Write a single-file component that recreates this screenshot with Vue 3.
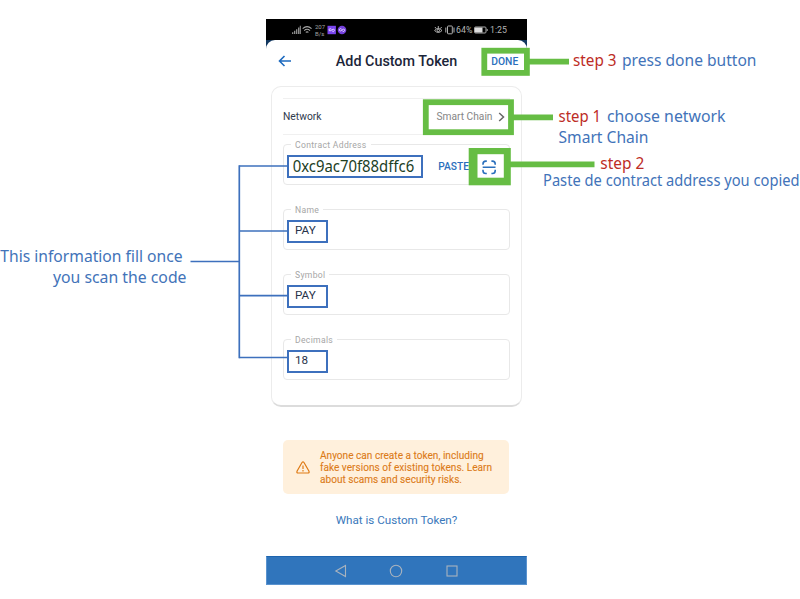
<script setup>
const fields = [
  { label: 'Contract Address', value: '', contract: true },
  { label: 'Name', value: 'PAY' },
  { label: 'Symbol', value: 'PAY' },
  { label: 'Decimals', value: '18' },
]

const branches = [166, 231, 295.7, 357.5]
const greenBoxes = [
  { x: 484.3, y: 50.7, w: 42.6, h: 22.2 },
  { x: 425.8, y: 102.2, w: 85.2, h: 30 },
]
const notes = [
  { t: 'step 3', x: 573, y: 65.5, w: 43.5, red: true },
  { t: 'press done button', x: 622, y: 65.5, w: 134.5 },
  { t: 'step 1', x: 558.5, y: 121.8, w: 42.5, red: true },
  { t: 'choose network', x: 607, y: 121.8, w: 118.5 },
  { t: 'Smart Chain', x: 558.5, y: 143, w: 90 },
  { t: 'step 2', x: 600.3, y: 169, w: 44, red: true },
  { t: 'Paste de contract address you copied', x: 543, y: 186, w: 256.5, small: true },
  { t: 'This information fill once', x: 0.3, y: 261.8, w: 182.3 },
  { t: 'you scan the code', x: 53, y: 283, w: 133.5 },
]
</script>

<template>
  <main class="page">
    <section class="phone">
      <div class="status">
        <svg class="signal" viewBox="0 0 18 9" width="20" height="10">
          <path d="M0 8h1.2V6.5H0zM1.8 8H3V5.2H1.8zM3.6 8h1.2V3.8H3.6zM5.4 8h1.2V2.2H5.4zM7 8h1V.6H7z" fill="#8c8c8c" />
          <g fill="none" stroke="#aaa" stroke-width="1"><path d="M9.6 3.2q4-3.4 8 0M11 5q2.6-2.3 5.200 0M12.400 6.700q1.200-1 2.400 0" /></g>
        </svg>
        <div class="speed"><span>207</span><span>B/s</span></div>
        <svg class="badges" viewBox="0 0 20 10" width="20" height="10">
          <rect x="0.500" y="0.800" width="8.400" height="8.400" fill="#7a45ee" />
          <circle cx="15" cy="5" r="4.300" fill="#7440dc" />
          <g fill="none" stroke="#e6dcff" stroke-width="0.900">
            <path d="M4.300 4.200Q3 3 2.200 4.200T3 6L6.200 4.200Q7.800 4.200 7.300 5.800T5.100 5.900" />
            <path d="M14.600 4.200Q13.300 3 12.500 4.200T13.300 6L16.500 4.200Q18 4.200 17.500 5.800T15.400 5.900" />
          </g>
        </svg>
        <svg class="modes" viewBox="0 0 21 10" width="21" height="10">
          <g fill="none" stroke="#c4c4c4" stroke-width="0.900">
            <path d="M.6 5.500Q4.300 1.500 8 5.500Q4.300 9.400.6 5.500M4.300 3.500V1M2.100 3.600L1 2M6.500 3.600L7.600 2" />
            <circle cx="4.300" cy="5.500" r="1.200" />
            <rect x="13.500" y="1" width="4.800" height="7.800" rx=".7" />
            <path d="M11.800 2.500v5M20 2.500v5" />
          </g>
        </svg>
        <span class="pct">64%</span>
        <svg class="battery" viewBox="0 0 14 8" width="14" height="8">
          <rect x=".5" y="1" width="11.500" height="6" rx="1" fill="none" stroke="#aaa" />
          <rect x="1" y="1.500" width="7.500" height="5" fill="#dedede" />
          <path d="M13.200 3v2" stroke="#aaa" />
        </svg>
        <span class="clock">1:25</span>
      </div>

      <div class="sheet">
        <header class="bar">
          <svg class="back" viewBox="0 0 14 12" width="14" height="12">
            <path d="M13 6H1.800M6.500 1L1.500 6l5 5" fill="none" stroke="#1d6abf" stroke-width="1.600" />
          </svg>
          <h1>Add Custom Token</h1>
          <span class="done">DONE</span>
        </header>

        <div class="card">
          <div class="network">
            <span class="net-label">Network</span>
            <span class="net-value">Smart Chain</span>
            <svg viewBox="0 0 7 10" width="7" height="10">
              <path d="M1.200 1L5.500 5 1.200 9" fill="none" stroke="#666" stroke-width="1.500" />
            </svg>
          </div>
          <fieldset v-for="f in fields" :key="f.label" class="field">
            <legend>{{ f.label }}</legend>
            <div v-if="f.contract" class="contract">
              <div class="mark address">
                <svg width="132" height="19" viewBox="0 0 132 19">
                  <text x="3.700" y="15.300" textLength="121.500" lengthAdjust="spacingAndGlyphs">0xc9ac70f88dffc6</text>
                </svg>
              </div>
              <span class="paste">PASTE</span>
            </div>
            <div v-else class="mark short">{{ f.value }}</div>
          </fieldset>
        </div>

        <div class="warning">
          <svg viewBox="0 0 14 13" width="14" height="13">
            <path d="M6 1.500Q7 .2 8 1.500L13 10.300Q13.500 12 12 12H2Q.5 12 1 10.300Z" fill="none" stroke="#df7a14" stroke-width="1.200" />
            <path d="M7 4.400V8M7 9v1.400" stroke="#df7a14" stroke-width="1.200" />
          </svg>
          <p>Anyone can create a token, including<br />fake versions of existing tokens. Learn<br />about scams and security risks.</p>
        </div>
        <a class="link">What is Custom Token?</a>
      </div>

      <nav class="nav">
        <svg viewBox="0 0 14 14" width="14" height="14"><path d="M11.500 1.500v11L1.800 7z" /></svg>
        <svg viewBox="0 0 14 14" width="14" height="14"><circle cx="7" cy="7" r="5.700" /></svg>
        <svg viewBox="0 0 14 14" width="14" height="14"><rect x="2" y="2" width="10" height="10" /></svg>
      </nav>
    </section>

    <svg class="notes" width="800" height="599" viewBox="0 0 800 599">
      <g class="tree">
        <path d="M190.500 261.500H239.300M239.300 165.300V358.200" />
        <path v-for="y in branches" :key="y" :d="`M239.300 ${y}H287`" />
      </g>
      <g class="green">
        <rect v-for="b in greenBoxes" :key="b.x" :x="b.x" :y="b.y" :width="b.w" :height="b.h" />
        <path d="M529 61.600H569M513 117.400H553M510 164.300H594.500" />
      </g>
      <rect x="468.700" y="148" width="42.100" height="37.300" fill="#66bd44" />
      <rect x="477.500" y="154.200" width="26.300" height="23.500" fill="#fff" />
      <path class="scan" d="M483 164.800v-.9q0-2.800 2.800-2.800h1M491.400 161.100h1q2.800 0 2.800 2.800v.9M495.200 169.800v.9q0 2.800-2.800 2.800h-1M486.800 173.500h-1q-2.800 0-2.800-2.800v-.9M482.700 167.200h12.800" />
      <text
        v-for="n in notes" :key="n.t" :x="n.x" :y="n.y"
        :textLength="n.w" lengthAdjust="spacingAndGlyphs"
        :class="{ red: n.red, small: n.small }"
      >{{ n.t }}</text>
    </svg>
  </main>
</template>

<style>
body { margin: 0; background: #fff; }
</style>

<style scoped>
.page {
  position: relative;
  width: 800px;
  height: 599px;
  overflow: hidden;
  box-sizing: border-box;
  padding: 19px 0 0 266px;
  font-family: Roboto, "Liberation Sans", sans-serif;
  background: #fff;
}
.phone {
  width: 261px;
  height: 566px;
  display: flex;
  flex-direction: column;
  background: linear-gradient(#000 21px, #12375f 21px, #12375f 30px, #fff 30px);
}
.status {
  height: 21px;
  flex: none;
  display: flex;
  align-items: center;
  padding: 1px 20px 0 26px;
  box-sizing: border-box;
  color: #b4b4b4;
  font-size: 8.800px;
}
.speed {
  display: flex;
  flex-direction: column;
  font-size: 6px;
  line-height: 7px;
  width: 10px;
  margin: 0 2px 0 3px;
  color: #a0a0a0;
}
.modes { margin-left: 87px; }
.pct { margin-left: 1px; width: 17px; }
.battery { margin-left: 1px; }
.clock { margin-left: 2px; font-size: 8.800px; white-space: nowrap; }
.sheet {
  flex: 1;
  display: flex;
  flex-direction: column;
  background: #fff;
  border-radius: 9px 9px 0 0;
}
.bar {
  height: 46px;
  flex: none;
  box-sizing: border-box;
  display: flex;
  align-items: center;
  padding: 0 8px 4px 12px;
}
h1 {
  margin: 0 0 0 43.800px;
  width: 122px;
  font-size: 14.350px;
  font-weight: 500;
  color: #1b2539;
  white-space: nowrap;
}
.done {
  margin-left: 33.500px;
  font-size: 10.300px;
  font-weight: 500;
  color: #2a6fbc;
}
.card {
  flex: none;
  margin: 0 5px;
  height: 321px;
  box-sizing: border-box;
  border: 1px solid #ececec;
  border-bottom: 2px solid #dcdcdc;
  border-radius: 10px;
  padding: 11px 11px 0;
}
.network {
  height: 37px;
  box-sizing: border-box;
  border-top: 1px solid #f0f0f0;
  border-bottom: 1px solid #f0f0f0;
  display: flex;
  align-items: center;
}
.net-label {
  flex: 1;
  color: #303b4e;
  font-size: 10.300px;
}
.net-value { color: #858585; font-size: 10.200px; margin-right: 5.500px; }
.network svg { margin-right: 5px; }
.field {
  margin: 4px 0 19px;
  padding: 0;
  height: 46px;
  box-sizing: border-box;
  border: 1px solid #e8e8e8;
  border-radius: 4px;
  min-width: 0;
}
.field + .field { margin-top: 0; }
legend {
  margin-left: 7px;
  padding: 0 4px;
  height: 11px;
  line-height: 13px;
  font-size: 8.600px;
  letter-spacing: 0.320px;
  color: #a6a6a6;
}
.contract { display: flex; align-items: center; }
.mark {
  box-sizing: border-box;
  border: 2px solid #3d70bd;
  height: 23px;
  margin: 5px 0 0 3px;
  background: #fff;
}
.address { width: 136px; }
.address svg { display: block; }
.address text { font: 15.600px "Noto Sans", sans-serif; fill: #21401f; }
.paste { margin: 4px 0 0 15.300px; font-size: 10.200px; font-weight: 500; color: #2a6fbc; }
.short {
  width: 41px;
  padding-left: 6px;
  line-height: 17px;
  font-size: 11.700px;
  color: #27324a;
}
.warning {
  flex: none;
  margin: 33px 18px 0 17px;
  height: 54px;
  box-sizing: border-box;
  border-radius: 5px;
  background: #fff0dc;
  display: flex;
  align-items: center;
  padding-left: 13px;
  gap: 10px;
}
.warning p {
  margin: 2px 0 0;
  font-size: 10.100px;
  line-height: 12px;
  color: #dc7b18;
  white-space: nowrap;
  -webkit-text-stroke: 0.100px #dc7b18;
}
.link {
  align-self: center;
  margin-top: 19px;
  font-size: 11.650px;
  line-height: 14px;
  color: #3a78bb;
}
.nav {
  flex: none;
  height: 29px;
  box-sizing: border-box;
  background: #3075bc;
  border: 1px solid #5a93cf;
  border-top-color: #1d64ae;
  display: flex;
  align-items: center;
  justify-content: center;
  gap: 41.500px;
  padding-right: 1px;
}
.nav svg { fill: none; stroke: #a9b3be; stroke-width: 1.100; }
.notes { position: absolute; left: 0; top: 0; }
.tree { stroke: #3d70bd; stroke-width: 1.700; fill: none; }
.green { stroke: #66bd44; stroke-width: 5.800; fill: none; }
.scan { stroke: #2a6fbc; stroke-width: 1.600; fill: none; }
.notes text { font: 16.800px "Noto Sans", sans-serif; fill: #4273b9; }
.notes text.red { fill: #bd2c25; }
.notes text.small { font-size: 15.600px; }
</style>
